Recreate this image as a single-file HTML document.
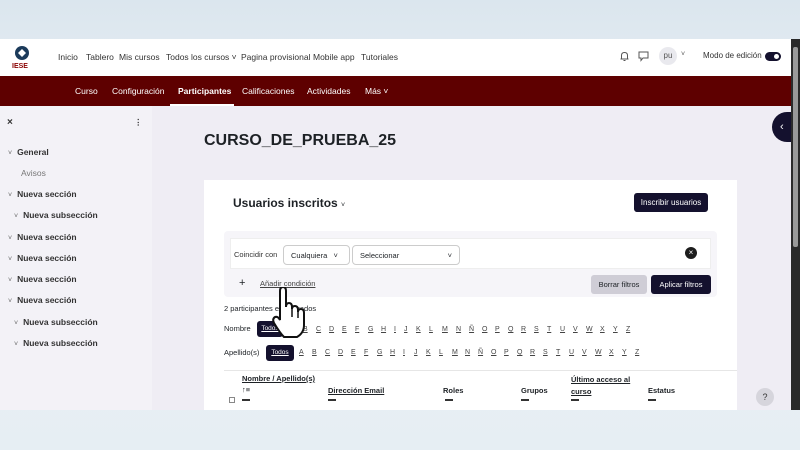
<!DOCTYPE html>
<html><head><meta charset="utf-8"><style>
*{box-sizing:border-box;margin:0;padding:0}
body{width:800px;height:450px;overflow:hidden;font-family:"Liberation Sans",sans-serif;background:linear-gradient(180deg,#dbe6ee 0%,#eef2f6 40%,#e6eef3 100%);position:relative;color:#1d2125}
.abs{position:absolute}
.top{left:0;top:39px;width:791px;height:37px;background:#fff;font-size:8.5px;color:#333}
.top span{position:absolute;top:13px;white-space:nowrap}
.red{left:0;top:76px;width:791px;height:30px;background:#5e0000;color:#fff;font-size:8.5px}
.side{left:0;top:106px;width:152px;height:304px;background:#f3f2f7}
.main{left:152px;top:106px;width:639px;height:304px;background:#efedf4}
.sb{left:791px;top:39px;width:9px;height:371px;background:#2a2a2a}
.card{left:204px;top:180px;width:533px;height:230px;background:#fff}
.side div{position:absolute;font-size:8.5px;font-weight:bold;color:#333}
.chev{font-weight:normal;color:#666;margin-right:5px;font-size:7px}
.btn{position:absolute;background:#14112e;color:#fff;font-size:8px;border-radius:3px;text-align:center}
.lt{position:absolute;font-size:7px;color:#444;text-decoration:underline}
</style></head><body>
<div class="abs top">
 <svg class="abs" style="left:11px;top:5px" width="22" height="26" viewBox="0 0 22 26"><circle cx="11" cy="9" r="7" fill="#1b3a5a"/><path d="M7 9 L11 5 L15 9 L11 13Z" fill="#fff"/><text x="1" y="24" font-size="7" font-weight="bold" fill="#8a0000" font-family="Liberation Sans">IESE</text></svg>
 <span style="left:58px">Inicio</span><span style="left:86px">Tablero</span><span style="left:119px">Mis cursos</span><span style="left:166px">Todos los cursos ˅</span><span style="left:241px">Pagina provisional</span><span style="left:313px">Mobile app</span><span style="left:361px">Tutoriales</span>
 <svg class="abs" style="left:620px;top:12px" width="9" height="11" viewBox="0 0 9 11"><path d="M1.5 8 L1.5 4.5 Q1.5 1.5 4.5 1.5 Q7.5 1.5 7.5 4.5 L7.5 8 Z M0.5 8 L8.5 8 M3.5 9.5 L5.5 9.5" fill="none" stroke="#555" stroke-width="1"/></svg>
 <svg class="abs" style="left:638px;top:12px" width="11" height="11" viewBox="0 0 11 11"><path d="M1 1 H10 V7 H5 L3 9.5 V7 H1 Z" fill="none" stroke="#555" stroke-width="1"/></svg>
 <div class="abs" style="left:659px;top:8px;width:18px;height:18px;border-radius:50%;background:#e9e9ee;font-size:8px;text-align:center;line-height:18px;color:#555">pu</div>
 <span style="left:681px;top:12px;font-size:7px;color:#555">˅</span>
 <span style="left:703px;top:12px;font-size:8px">Modo de edición</span>
 <div class="abs" style="left:765px;top:13px;width:16px;height:9px;border-radius:5px;background:#14112e"><div class="abs" style="left:9px;top:2px;width:5px;height:5px;border-radius:50%;background:#fff"></div></div>
</div>
<div class="abs red">
 <div class="abs" style="left:75px;top:10px">Curso</div>
 <div class="abs" style="left:112px;top:10px">Configuración</div>
 <div class="abs" style="left:178px;top:10px;font-weight:bold">Participantes</div>
 <div class="abs" style="left:170px;top:28px;width:64px;height:2px;background:#fff"></div>
 <div class="abs" style="left:242px;top:10px">Calificaciones</div>
 <div class="abs" style="left:307px;top:10px">Actividades</div>
 <div class="abs" style="left:365px;top:10px">Más ˅</div>
</div>
<div class="abs side">
 <div style="left:7px;top:11px;font-size:10px">×</div>
 <div style="left:134px;top:11px">⋮</div>
 <div style="left:8px;top:41px"><span class="chev">˅</span>General</div>
 <div style="left:21px;top:62px;font-weight:normal;color:#777">Avisos</div>
 <div style="left:8px;top:83px"><span class="chev">˅</span>Nueva sección</div>
 <div style="left:14px;top:104px"><span class="chev">˅</span>Nueva subsección</div>
 <div style="left:8px;top:126px"><span class="chev">˅</span>Nueva sección</div>
 <div style="left:8px;top:147px"><span class="chev">˅</span>Nueva sección</div>
 <div style="left:8px;top:168px"><span class="chev">˅</span>Nueva sección</div>
 <div style="left:8px;top:189px"><span class="chev">˅</span>Nueva sección</div>
 <div style="left:14px;top:211px"><span class="chev">˅</span>Nueva subsección</div>
 <div style="left:14px;top:232px"><span class="chev">˅</span>Nueva subsección</div>
</div>
<div class="abs main"></div>
<div class="abs" style="left:204px;top:132px;font-size:16px;font-weight:bold;color:#1d2125">CURSO_DE_PRUEBA_25</div>
<div class="abs" style="left:772px;top:112px;width:24px;height:30px;border-radius:15px 0 0 15px;background:#14112e;color:#fff;font-size:11px;line-height:30px;padding-left:8px">‹</div>
<div class="abs card">
 <div class="abs" style="left:29px;top:16px;font-size:12px;font-weight:bold">Usuarios inscritos <span style="font-size:7px;font-weight:normal">˅</span></div>
 <div class="btn" style="left:430px;top:13px;width:74px;height:19px;line-height:19px">Inscribir usuarios</div>
 <div class="abs" style="left:20px;top:51px;width:493px;height:66px;background:#f6f5f9;border-radius:4px"></div>
 <div class="abs" style="left:26px;top:58px;width:481px;height:31px;background:#fff;border:1px solid #eee"></div>
 <div class="abs" style="left:30px;top:70px;font-size:7.5px;color:#333">Coincidir con</div>
 <div class="abs" style="left:79px;top:65px;width:67px;height:20px;border:1px solid #ccc;border-radius:4px;font-size:7.5px;padding:5px 7px">Cualquiera&nbsp;&nbsp; ˅</div>
 <div class="abs" style="left:148px;top:65px;width:108px;height:20px;border:1px solid #ccc;border-radius:4px;font-size:7.5px;padding:5px 7px">Seleccionar<span style="float:right">˅</span></div>
 <div class="abs" style="left:481px;top:67px;width:12px;height:12px;border-radius:50%;background:#1d1d1d;color:#fff;font-size:8px;text-align:center;line-height:12px">×</div>
 <div class="abs" style="left:35px;top:97px;font-size:11px">+</div>
 <div class="lt" style="left:56px;top:99px;font-size:7.5px">Añadir condición</div>
 <div class="abs" style="left:387px;top:95px;width:56px;height:19px;background:#cfcdd6;border-radius:3px;font-size:7.5px;text-align:center;line-height:19px">Borrar filtros</div>
 <div class="btn" style="left:447px;top:95px;width:60px;height:19px;line-height:19px;font-size:7.5px">Aplicar filtros</div>
 <div class="abs" style="left:20px;top:124px;font-size:7.5px">2 participantes encontrados</div>
 <div class="abs" style="left:20px;top:144px;font-size:7.5px">Nombre</div>
 <div class="btn" style="left:53px;top:141px;width:26px;height:16px;line-height:16px;font-size:6.5px;text-decoration:underline">Todos</div>
 <div class="abs" style="left:20px;top:168px;font-size:7.5px">Apellido(s)</div>
 <div class="btn" style="left:62px;top:165px;width:28px;height:16px;line-height:16px;font-size:6.5px;text-decoration:underline">Todos</div>
 <div class="abs" style="left:20px;top:190px;width:513px;height:1px;background:#e6e6e6"></div>
 <div class="abs" style="left:38px;top:194px;font-size:7.5px;font-weight:bold;text-decoration:underline">Nombre / Apellido(s)</div>
 <div class="abs" style="left:38px;top:205px;font-size:7.5px;font-weight:bold">↑≡</div>
 <div class="abs" style="left:124px;top:206px;font-size:7.5px;font-weight:bold;text-decoration:underline">Dirección Email</div>
 <div class="abs" style="left:239px;top:206px;font-size:7.5px;font-weight:bold">Roles</div>
 <div class="abs" style="left:317px;top:206px;font-size:7.5px;font-weight:bold">Grupos</div>
 <div class="abs" style="left:367px;top:194px;font-size:7.5px;font-weight:bold;text-decoration:underline;line-height:12px">Último acceso al<br>curso</div>
 <div class="abs" style="left:444px;top:206px;font-size:7.5px;font-weight:bold">Estatus</div>
 <div class="abs" style="left:25px;top:217px;width:6px;height:6px;border:1px solid #888"></div>
 <div class="abs" style="left:38px;top:219px;width:8px;height:1.5px;background:#333"></div>
 <div class="abs" style="left:124px;top:219px;width:8px;height:1.5px;background:#333"></div>
 <div class="abs" style="left:241px;top:219px;width:8px;height:1.5px;background:#333"></div>
 <div class="abs" style="left:317px;top:219px;width:8px;height:1.5px;background:#333"></div>
 <div class="abs" style="left:367px;top:219px;width:8px;height:1.5px;background:#333"></div>
 <div class="abs" style="left:444px;top:219px;width:8px;height:1.5px;background:#333"></div>
</div>
<div class="abs" style="left:0;top:0;font-size:7px;color:#444">
 <span class="lt" style="left:303px;top:326px">B</span><span class="lt" style="left:316px;top:326px">C</span><span class="lt" style="left:329px;top:326px">D</span><span class="lt" style="left:342px;top:326px">E</span><span class="lt" style="left:355px;top:326px">F</span><span class="lt" style="left:368px;top:326px">G</span><span class="lt" style="left:381px;top:326px">H</span><span class="lt" style="left:394px;top:326px">I</span><span class="lt" style="left:404px;top:326px">J</span><span class="lt" style="left:416px;top:326px">K</span><span class="lt" style="left:429px;top:326px">L</span><span class="lt" style="left:442px;top:326px">M</span><span class="lt" style="left:456px;top:326px">N</span><span class="lt" style="left:469px;top:326px">Ñ</span><span class="lt" style="left:482px;top:326px">O</span><span class="lt" style="left:495px;top:326px">P</span><span class="lt" style="left:508px;top:326px">Q</span><span class="lt" style="left:521px;top:326px">R</span><span class="lt" style="left:534px;top:326px">S</span><span class="lt" style="left:547px;top:326px">T</span><span class="lt" style="left:560px;top:326px">U</span><span class="lt" style="left:573px;top:326px">V</span><span class="lt" style="left:586px;top:326px">W</span><span class="lt" style="left:600px;top:326px">X</span><span class="lt" style="left:613px;top:326px">Y</span><span class="lt" style="left:626px;top:326px">Z</span>
 <span class="lt" style="left:299px;top:349px">A</span><span class="lt" style="left:312px;top:349px">B</span><span class="lt" style="left:325px;top:349px">C</span><span class="lt" style="left:338px;top:349px">D</span><span class="lt" style="left:351px;top:349px">E</span><span class="lt" style="left:364px;top:349px">F</span><span class="lt" style="left:377px;top:349px">G</span><span class="lt" style="left:390px;top:349px">H</span><span class="lt" style="left:403px;top:349px">I</span><span class="lt" style="left:414px;top:349px">J</span><span class="lt" style="left:426px;top:349px">K</span><span class="lt" style="left:439px;top:349px">L</span><span class="lt" style="left:452px;top:349px">M</span><span class="lt" style="left:465px;top:349px">N</span><span class="lt" style="left:478px;top:349px">Ñ</span><span class="lt" style="left:491px;top:349px">O</span><span class="lt" style="left:504px;top:349px">P</span><span class="lt" style="left:517px;top:349px">Q</span><span class="lt" style="left:530px;top:349px">R</span><span class="lt" style="left:543px;top:349px">S</span><span class="lt" style="left:556px;top:349px">T</span><span class="lt" style="left:569px;top:349px">U</span><span class="lt" style="left:582px;top:349px">V</span><span class="lt" style="left:595px;top:349px">W</span><span class="lt" style="left:609px;top:349px">X</span><span class="lt" style="left:622px;top:349px">Y</span><span class="lt" style="left:635px;top:349px">Z</span>
</div>
<svg class="abs" style="left:270px;top:287px" width="40" height="52" viewBox="0 0 40 52"><path d="M10 4 Q10 0 13 0 Q16 0 16 4 L16 20 Q16 16 19 16 Q22 16 22 20 L22 22 Q22 19 25 19 Q28 19 28 23 L28 25 Q28 22 31 22 Q34 22 34 26 L34 38 Q34 46 27 50 L14 50 Q10 46 4 36 Q2 32 5 30 Q8 29 10 33 Z" fill="#fff" stroke="#111" stroke-width="2"/><path d="M22 22 L22 30 M28 25 L28 31" stroke="#111" stroke-width="1.5"/></svg>
<div class="abs" style="left:756px;top:388px;width:18px;height:18px;border-radius:50%;background:#d6d5dc;font-size:9px;text-align:center;line-height:18px;color:#333">?</div>
<div class="abs sb"><div class="abs" style="left:2px;top:8px;width:5px;height:200px;background:#999;border-radius:2px"></div></div>
</body></html>
